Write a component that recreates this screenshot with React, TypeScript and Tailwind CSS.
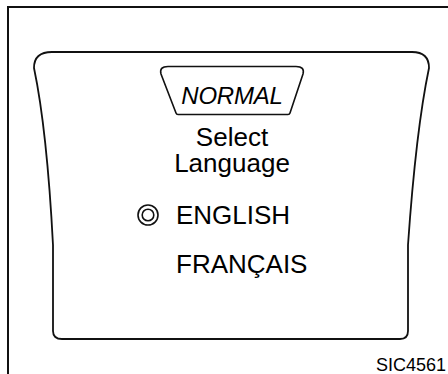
import React from "react";

function Screen({ children }: { children: React.ReactNode }) {
  return (
    <div className="relative ml-[24px] mt-[42px] h-[291px] w-[398px]">
      {/* display outline */}
      <svg
        className="absolute inset-0"
        width="398"
        height="291"
        viewBox="0 0 398 291"
        fill="none"
      >
        <path
          d="M 19 2 L 379 2 Q 396 2 396 18 Q 383 80 375 195 L 375 281 Q 375 289 367 289 L 29 289 Q 20 289 20 281 L 20 195 Q 14 80 1 18 Q 1 2 19 2 Z"
          stroke="#111"
          strokeWidth="1.8"
        />
      </svg>
      <div className="relative flex flex-col pt-[15px]">{children}</div>
    </div>
  );
}

function ModeBadge() {
  return (
    <div className="relative mx-auto h-[51px] w-[146px]">
      <svg
        className="absolute inset-0"
        width="146"
        height="51"
        viewBox="0 0 146 51"
        fill="none"
      >
        <path
          d="M 9 1.5 L 137 1.5 Q 146 1.5 144 9 L 131 48 Q 130.5 49.5 129 49.5 L 19 49.5 Q 17.5 49.5 17 48 L 2 9 Q 0 1.5 9 1.5 Z"
          stroke="#111"
          strokeWidth="1.6"
        />
      </svg>
      <div className="relative pt-[19px] text-center text-[24px] italic leading-[24px] tracking-[-0.2px]">
        NORMAL
      </div>
    </div>
  );
}

function RadioMark() {
  return (
    <svg width="22" height="22" viewBox="0 0 22 22" fill="none">
      <circle cx="11" cy="11" r="10" stroke="#111" strokeWidth="1.6" />
      <circle cx="11" cy="11" r="5.8" stroke="#111" strokeWidth="1.6" />
    </svg>
  );
}

export default function App() {
  return (
    <div
      className="h-[374px] w-[448px] overflow-hidden bg-white text-black"
      style={{ fontFamily: '"Liberation Sans", Arial, sans-serif' }}
    >
      <div className="ml-[7px] mt-[6px] flex h-[368px] flex-col border-l-2 border-t-2 border-[#111]">
        <Screen>
          <ModeBadge />
          <div className="mt-[8px] text-center text-[26px] leading-[26px]">
            <div>Select</div>
            <div>Language</div>
          </div>
          <div className="mt-[26px] flex items-center gap-[17px] pl-[104px] text-[26px] leading-[26px]">
            <RadioMark />
            <span>ENGLISH</span>
          </div>
          <div className="mt-[23px] pl-[143px] text-[26px] leading-[26px]">
            FRANÇAIS
          </div>
        </Screen>
        <div className="mt-[15px] pr-[2px] text-right text-[18px] leading-[18px]">
          SIC4561
        </div>
      </div>
    </div>
  );
}
